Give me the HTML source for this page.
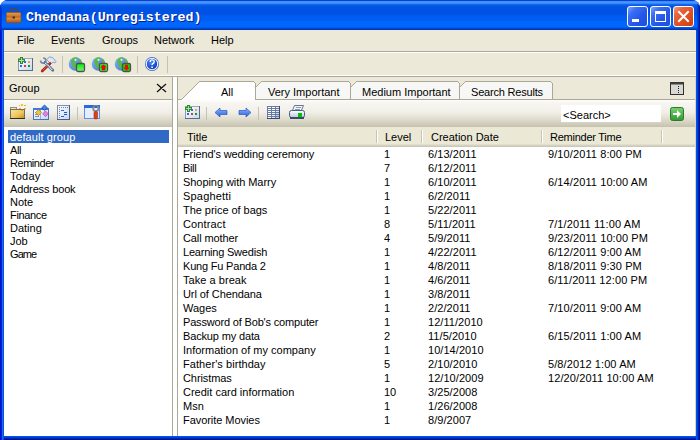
<!DOCTYPE html>
<html><head><meta charset="utf-8">
<style>
*{box-sizing:border-box;margin:0;padding:0}
html,body{width:700px;height:440px;overflow:hidden;background:#fff}
body{position:relative;font-family:"Liberation Sans",sans-serif;font-size:11px;color:#000}
.a{position:absolute}
#win{left:0;top:0;width:700px;height:440px;background:#0831d9;border-radius:8px 8px 0 0;overflow:hidden}
#title{left:0;top:0;width:700px;height:30px;background:linear-gradient(180deg,#0a3cd6 0,#0a3cd6 1px,#3a8ef8 1px,#4a9bff 3px,#2074f4 4px,#0a5ce8 5px,#0052e2 7px,#0052e2 14px,#005cf0 16px,#005ef2 20px,#0066fe 22px,#0066fe 27px,#0050e0 28px,#0040c4 29px,#002c9c 30px)}
#lb{left:0;top:30px;width:4px;height:410px;background:linear-gradient(90deg,#0014cf 0,#0014cf 1px,#0024d8 1px,#0024d8 2px,#1a68f2 2px,#1a68f2 3px,#0a52dc 3px)}
#rb{left:696px;top:30px;width:4px;height:410px;background:linear-gradient(90deg,#0052f0 0,#0052f0 1px,#0040d6 1px,#0040d6 2px,#0022ac 2px,#0022ac 3px,#00138c 3px)}
#bb{left:4px;top:436px;width:692px;height:4px;background:linear-gradient(180deg,#0052f0 0,#0052f0 1px,#0040d2 1px,#0040d2 2px,#0026b0 2px,#0026b0 3px,#00138c 3px)}
#client{left:4px;top:30px;width:692px;height:406px;background:#ece9d8}
#ttxt{left:26px;top:10px;font-family:"Liberation Mono",monospace;font-weight:bold;font-size:13.3px;color:#fff;text-shadow:1px 1px #0a1e8a;line-height:15px;white-space:pre}
.tb{top:6px;width:21px;height:21px;border:1px solid #fff;border-radius:3px}
.blue{background:linear-gradient(135deg,#7aa6ff 0,#3b6ef5 25%,#2457e8 60%,#1f4fdd 100%)}
.red{background:linear-gradient(135deg,#f0a080 0,#e8643c 25%,#df4f20 60%,#cf3e10 100%)}
.menu{top:34px;line-height:12px;white-space:pre}
.li{line-height:12px;white-space:pre}
.tab{line-height:12px;white-space:pre}
</style></head><body>
<div id="win" class="a">
 <div id="title" class="a"></div>
 <div id="lb" class="a"></div>
 <div id="rb" class="a"></div>
 <div id="bb" class="a"></div>
 <div class="a" style="left:0;top:5px;width:1px;height:25px;background:#0a2cd4"></div>
 <div class="a" style="left:699px;top:6px;width:1px;height:24px;background:#00189a"></div>
 <div class="a" style="left:698px;top:5px;width:1px;height:25px;background:#0630c4"></div>
 <div class="a" style="left:697px;top:4px;width:1px;height:26px;background:rgba(0,40,200,0.5)"></div>
 <div class="a" style="left:1px;top:8px;width:1px;height:22px;background:rgba(0,30,200,0.5)"></div>
 <div id="client" class="a"></div>
</div>
<div id="ttxt" class="a">Chendana(Unregistered)</div>
<div class="a tb blue" style="left:627px"><div class="a" style="left:4px;top:12px;width:7px;height:3px;background:#fff"></div></div>
<div class="a tb blue" style="left:650px"><div class="a" style="left:4px;top:4px;width:11px;height:11px;border:1px solid #fff;border-top-width:3px"></div></div>
<div class="a tb red" style="left:673px"><svg class="a" style="left:0;top:0" width="19" height="19"><path d="M5 5 L14 14 M14 5 L5 14" stroke="#fff" stroke-width="2" stroke-linecap="square"/></svg></div>

<!-- menu -->
<div class="a menu" style="left:17px">File</div>
<div class="a menu" style="left:51px">Events</div>
<div class="a menu" style="left:102px">Groups</div>
<div class="a menu" style="left:154px">Network</div>
<div class="a menu" style="left:211px">Help</div>
<div class="a" style="left:4px;top:51px;width:692px;height:1px;background:#aca899"></div>
<div class="a" style="left:4px;top:52px;width:692px;height:1px;background:#fff"></div>
<div class="a" style="left:4px;top:75px;width:692px;height:1px;background:#fff"></div>
<div class="a" style="left:4px;top:76px;width:692px;height:1px;background:#aca899"></div>


<!-- main toolbar -->
<svg class="a" style="left:0;top:0" width="700" height="440">
 <defs>
  <linearGradient id="card" x1="0" y1="0" x2="1" y2="1"><stop offset="0" stop-color="#ffffff"/><stop offset="1" stop-color="#c9daf2"/></linearGradient>
  <linearGradient id="globe" x1="0" y1="0" x2="1" y2="1"><stop offset="0" stop-color="#8ab8ff"/><stop offset="1" stop-color="#3a6ed8"/></linearGradient>
  <linearGradient id="gsq" x1="0" y1="0" x2="0" y2="1"><stop offset="0" stop-color="#00f000"/><stop offset="1" stop-color="#80ee80"/></linearGradient>
  <radialGradient id="help" cx="0.4" cy="0.35" r="0.7"><stop offset="0" stop-color="#4a8cff"/><stop offset="1" stop-color="#0a38b8"/></radialGradient>
  <linearGradient id="folder" x1="0" y1="0" x2="1" y2="1"><stop offset="0" stop-color="#fde9a0"/><stop offset="1" stop-color="#d9a530"/></linearGradient>
  <linearGradient id="arrow" x1="0" y1="0" x2="0" y2="1"><stop offset="0" stop-color="#8fb8ff"/><stop offset="1" stop-color="#2a5ed8"/></linearGradient>
  <linearGradient id="gbtn" x1="0" y1="0" x2="0" y2="1"><stop offset="0" stop-color="#7cd070"/><stop offset="1" stop-color="#2e9a34"/></linearGradient>
  <linearGradient id="hamm" x1="0" y1="0" x2="1" y2="1"><stop offset="0" stop-color="#f4f8ff"/><stop offset="1" stop-color="#a8b8d8"/></linearGradient>
 </defs>
 <g shape-rendering="crispEdges">
  <rect x="18" y="58" width="15" height="13" fill="#5a6a8a"/>
  <rect x="18" y="58" width="14" height="1" fill="#9aa8c0"/>
  <rect x="18" y="58" width="1" height="12" fill="#8a98b0"/>
  <rect x="19" y="59" width="13" height="11" fill="url(#card)"/>
  <rect x="24" y="61" width="2" height="2" fill="#2f6fe0"/><rect x="28" y="61" width="2" height="2" fill="#f5a040"/>
  <rect x="20" y="65" width="2" height="2" fill="#2f6fe0"/><rect x="24" y="65" width="2" height="2" fill="#e04020"/><rect x="28" y="65" width="2" height="2" fill="#10a020"/>
  <rect x="20" y="57" width="3" height="7" fill="#2f8a2f"/>
  <rect x="18" y="59" width="7" height="3" fill="#2f8a2f"/>
  <rect x="21" y="58" width="1" height="5" fill="#a8e0a0"/>
  <rect x="19" y="60" width="5" height="1" fill="#a8e0a0"/>
 </g>
 <g>
  <path d="M46.5 59.5 L49.5 57 L52.5 57.5 L56 61.5 L55 63 L53 62 L51 64 L49 62 Z" fill="#dfe6f4" stroke="#7a8cb0" stroke-width="0.8"/>
  <path d="M50 63.5 L42.2 71" stroke="#a82010" stroke-width="2.6" stroke-linecap="round"/>
  <path d="M49.6 63.6 L42.6 70.4" stroke="#f06a48" stroke-width="0.9"/>
  <path d="M40.6 60.6 A2.6 2.6 0 1 0 43.2 58" fill="none" stroke="#7088ac" stroke-width="1.6"/>
  <path d="M45 62.5 L52.8 70.3" stroke="#5a6e98" stroke-width="2.8" stroke-linecap="round"/>
  <path d="M45.4 62.9 L52.4 69.9" stroke="#f4f8ff" stroke-width="1.3" stroke-dasharray="1.1 0.6"/>
 </g>
 <rect x="62" y="56" width="1" height="17" fill="#c5c2b2"/>
 <g id="gl1">
  <circle cx="75.5" cy="64" r="6.8" fill="url(#globe)"/>
  <path d="M71.5 59.5 q2 -2.5 5.5 -2.2 q0.8 1.8 -0.8 3.5 q-2 1.6 -0.4 3.6 q1.2 1.8 -0.2 4 q-1 0.6 -2.2 -0.4 q-0.6 -2.4 -2 -4 q-0.6 -2.4 0.1 -4.5z" fill="#58b848"/>
  <path d="M79 58.5 q2.6 1.6 3 4.6 l-2.2 0.6 q-1.6 -2 -0.8 -5.2z" fill="#58b848"/>
  <circle cx="75.5" cy="59.8" r="1.1" fill="#ffffff" opacity="0.85"/>
 </g>
 <rect x="76.5" y="63.5" width="8" height="8" rx="1.5" fill="url(#gsq)" stroke="#505050" stroke-width="1.3"/>
 <use href="#gl1" x="23"/>
 <rect x="99.5" y="63.5" width="8" height="8" rx="1.5" fill="#80f080" stroke="#505050" stroke-width="1.3"/>
 <rect x="100.5" y="64.5" width="6" height="6" fill="#00e000"/>
 <path d="M103.5 64.6 l3.2 3 h-1.7 v2.6 h-3 v-2.6 h-1.7z" fill="#ff0000"/>
 <use href="#gl1" x="46"/>
 <rect x="122.5" y="63.5" width="8" height="8" rx="1.5" fill="#00e000" stroke="#505050" stroke-width="1.3"/>
 <path d="M126.5 70.4 l3.2 -3 h-1.7 v-2.6 h-3 v2.6 h-1.7z" fill="#ff0000"/>
 <rect x="137" y="56" width="1" height="17" fill="#c5c2b2"/>
 <g>
  <circle cx="152" cy="64" r="7" fill="#3a64c8"/>
  <circle cx="152" cy="64" r="5.7" fill="none" stroke="#eef4ff" stroke-width="1.1"/>
  <circle cx="152" cy="64" r="4.9" fill="url(#help)"/>
  <path d="M150.1 62 q0 -2.1 2 -2.1 q2.1 0 2.1 1.9 q0 1.2 -1.4 1.9 q-0.7 0.4 -0.7 1.4" fill="none" stroke="#fff" stroke-width="1.4"/>
  <rect x="151.3" y="66.5" width="1.6" height="1.5" fill="#fff"/>
 </g>
 <rect x="167" y="56" width="1" height="17" fill="#c5c2b2"/>
</svg>

<!-- left panel -->
<div class="a li" style="left:9px;top:82px">Group</div>
<svg class="a" style="left:156px;top:83px" width="12" height="11"><path d="M1.3 1.3 L9.7 8.7 M9.7 1.3 L1.3 8.7" stroke="#111" stroke-width="1.25" stroke-linecap="round"/></svg>
<div class="a" style="left:4px;top:99px;width:169px;height:1px;background:#aca899"></div>
<div class="a" style="left:4px;top:100px;width:169px;height:27px;background:linear-gradient(180deg,#fdfdfc 0,#f8f6f1 10%,#f1efe8 45%,#e4e1d4 65%,#d3d0c0 85%,#c4c1ae 100%)"></div>
<div class="a" style="left:4px;top:127px;width:168px;height:309px;background:#fff"></div>
<div class="a" style="left:172px;top:77px;width:1px;height:359px;background:#aca899"></div>
<div class="a" style="left:173px;top:77px;width:4px;height:359px;background:#fff"></div>
<div class="a" style="left:177px;top:76px;width:1px;height:360px;background:#aca899"></div>
<div class="a" style="left:8px;top:130px;width:161px;height:13px;background:#316ac5"></div><div class="a li" style="left:10px;letter-spacing:0.09px;top:131px;color:#fff">default group</div><div class="a li" style="left:10px;letter-spacing:-0.35px;top:144px">All</div><div class="a li" style="left:10px;letter-spacing:-0.46px;top:157px">Reminder</div><div class="a li" style="left:10px;letter-spacing:0.25px;top:170px">Today</div><div class="a li" style="left:10px;letter-spacing:-0.15px;top:183px">Address book</div><div class="a li" style="left:10px;letter-spacing:-0.03px;top:196px">Note</div><div class="a li" style="left:10px;letter-spacing:-0.33px;top:209px">Finance</div><div class="a li" style="left:10px;top:222px">Dating</div><div class="a li" style="left:10px;top:235px">Job</div><div class="a li" style="left:10px;letter-spacing:-0.93px;top:248px">Game</div>
<!-- right panel -->
<div class="a" style="left:178px;top:100px;width:517px;height:27px;background:linear-gradient(180deg,#fdfdfc 0,#f8f6f1 10%,#f1efe8 45%,#e4e1d4 65%,#d3d0c0 85%,#c4c1ae 100%)"></div>
<div class="a" style="left:178px;top:127px;width:517px;height:17px;background:#ebe8d6"></div>
<div class="a" style="left:178px;top:144px;width:517px;height:1px;background:#e2decd"></div>
<div class="a" style="left:178px;top:145px;width:517px;height:1px;background:#d6d2c2"></div>
<div class="a" style="left:178px;top:146px;width:517px;height:1px;background:#cbc7b8"></div>
<div class="a" style="left:178px;top:147px;width:517px;height:289px;background:#fff"></div>
<div class="a" style="left:695px;top:77px;width:1px;height:359px;background:#d8d4c4"></div>
<div class="a li" style="left:187px;top:131px">Title</div>
<div class="a li" style="left:385px;top:131px">Level</div>
<div class="a li" style="left:431px;top:131px">Creation Date</div>
<div class="a li" style="left:550px;top:131px;letter-spacing:-0.25px">Reminder Time</div>
<div class="a" style="left:376px;top:130px;width:1px;height:13px;background:#c7c5b2"></div><div class="a" style="left:377px;top:130px;width:1px;height:13px;background:#fff"></div>
<div class="a" style="left:421px;top:130px;width:1px;height:13px;background:#c7c5b2"></div><div class="a" style="left:422px;top:130px;width:1px;height:13px;background:#fff"></div>
<div class="a" style="left:541px;top:130px;width:1px;height:13px;background:#c7c5b2"></div><div class="a" style="left:542px;top:130px;width:1px;height:13px;background:#fff"></div>
<div class="a" style="left:661px;top:130px;width:1px;height:13px;background:#c7c5b2"></div><div class="a" style="left:662px;top:130px;width:1px;height:13px;background:#fff"></div>
<div class="a li" style="left:183px;letter-spacing:-0.12px;top:148px">Friend's wedding ceremony</div><div class="a li" style="left:384px;top:148px">1</div><div class="a li" style="left:428px;letter-spacing:0.05px;top:148px">6/13/2011</div><div class="a li" style="left:548px;letter-spacing:0.1px;top:148px">9/10/2011 8:00 PM</div><div class="a li" style="left:183px;letter-spacing:-0.33px;top:162px">Bill</div><div class="a li" style="left:384px;top:162px">7</div><div class="a li" style="left:428px;letter-spacing:0.05px;top:162px">6/12/2011</div><div class="a li" style="left:183px;letter-spacing:-0.06px;top:176px">Shoping with Marry</div><div class="a li" style="left:384px;top:176px">1</div><div class="a li" style="left:428px;letter-spacing:0.05px;top:176px">6/10/2011</div><div class="a li" style="left:548px;letter-spacing:0.1px;top:176px">6/14/2011 10:00 AM</div><div class="a li" style="left:183px;letter-spacing:0.19px;top:190px">Spaghetti</div><div class="a li" style="left:384px;top:190px">1</div><div class="a li" style="left:428px;letter-spacing:0.05px;top:190px">6/2/2011</div><div class="a li" style="left:183px;letter-spacing:-0.04px;top:204px">The price of bags</div><div class="a li" style="left:384px;top:204px">1</div><div class="a li" style="left:428px;letter-spacing:0.05px;top:204px">5/22/2011</div><div class="a li" style="left:183px;letter-spacing:0.14px;top:218px">Contract</div><div class="a li" style="left:384px;top:218px">8</div><div class="a li" style="left:428px;letter-spacing:0.05px;top:218px">5/11/2011</div><div class="a li" style="left:548px;letter-spacing:0.1px;top:218px">7/1/2011 11:00 AM</div><div class="a li" style="left:183px;letter-spacing:-0.12px;top:232px">Call mother</div><div class="a li" style="left:384px;top:232px">4</div><div class="a li" style="left:428px;letter-spacing:0.05px;top:232px">5/9/2011</div><div class="a li" style="left:548px;letter-spacing:0.1px;top:232px">9/23/2011 10:00 PM</div><div class="a li" style="left:183px;letter-spacing:-0.21px;top:246px">Learning Swedish</div><div class="a li" style="left:384px;top:246px">1</div><div class="a li" style="left:428px;letter-spacing:0.05px;top:246px">4/22/2011</div><div class="a li" style="left:548px;letter-spacing:0.1px;top:246px">6/12/2011 9:00 AM</div><div class="a li" style="left:183px;letter-spacing:-0.19px;top:260px">Kung Fu Panda 2</div><div class="a li" style="left:384px;top:260px">1</div><div class="a li" style="left:428px;letter-spacing:0.05px;top:260px">4/8/2011</div><div class="a li" style="left:548px;letter-spacing:0.1px;top:260px">8/18/2011 9:30 PM</div><div class="a li" style="left:183px;letter-spacing:0.05px;top:274px">Take a break</div><div class="a li" style="left:384px;top:274px">1</div><div class="a li" style="left:428px;letter-spacing:0.05px;top:274px">4/6/2011</div><div class="a li" style="left:548px;letter-spacing:0.1px;top:274px">6/11/2011 12:00 PM</div><div class="a li" style="left:183px;letter-spacing:-0.08px;top:288px">Url of Chendana</div><div class="a li" style="left:384px;top:288px">1</div><div class="a li" style="left:428px;letter-spacing:0.05px;top:288px">3/8/2011</div><div class="a li" style="left:183px;top:302px">Wages</div><div class="a li" style="left:384px;top:302px">1</div><div class="a li" style="left:428px;letter-spacing:0.05px;top:302px">2/2/2011</div><div class="a li" style="left:548px;letter-spacing:0.1px;top:302px">7/10/2011 9:00 AM</div><div class="a li" style="left:183px;letter-spacing:-0.17px;top:316px">Password of Bob's computer</div><div class="a li" style="left:384px;top:316px">1</div><div class="a li" style="left:428px;letter-spacing:0.05px;top:316px">12/11/2010</div><div class="a li" style="left:183px;letter-spacing:-0.15px;top:330px">Backup my data</div><div class="a li" style="left:384px;top:330px">2</div><div class="a li" style="left:428px;letter-spacing:0.05px;top:330px">11/5/2010</div><div class="a li" style="left:548px;letter-spacing:0.1px;top:330px">6/15/2011 1:00 AM</div><div class="a li" style="left:183px;top:344px">Information of my company</div><div class="a li" style="left:384px;top:344px">1</div><div class="a li" style="left:428px;letter-spacing:0.05px;top:344px">10/14/2010</div><div class="a li" style="left:183px;letter-spacing:0.06px;top:358px">Father's birthday</div><div class="a li" style="left:384px;top:358px">5</div><div class="a li" style="left:428px;letter-spacing:0.05px;top:358px">2/10/2010</div><div class="a li" style="left:548px;letter-spacing:0.1px;top:358px">5/8/2012 1:00 AM</div><div class="a li" style="left:183px;letter-spacing:-0.09px;top:372px">Christmas</div><div class="a li" style="left:384px;top:372px">1</div><div class="a li" style="left:428px;letter-spacing:0.05px;top:372px">12/10/2009</div><div class="a li" style="left:548px;letter-spacing:0.1px;top:372px">12/20/2011 10:00 AM</div><div class="a li" style="left:183px;top:386px">Credit card information</div><div class="a li" style="left:384px;top:386px">10</div><div class="a li" style="left:428px;letter-spacing:0.05px;top:386px">3/25/2008</div><div class="a li" style="left:183px;top:400px">Msn</div><div class="a li" style="left:384px;top:400px">1</div><div class="a li" style="left:428px;letter-spacing:0.05px;top:400px">1/26/2008</div><div class="a li" style="left:183px;letter-spacing:-0.05px;top:414px">Favorite Movies</div><div class="a li" style="left:384px;top:414px">1</div><div class="a li" style="left:428px;letter-spacing:0.05px;top:414px">8/9/2007</div>
<svg class="a" style="left:0;top:0" width="700" height="440" shape-rendering="crispEdges"><rect x="177" y="99" width="518" height="1" fill="#aca899"/><polygon points="460,99 460,87 465,82 551,82 552,83 552,99" fill="#f7f7f5" stroke="none"/><rect x="460" y="86" width="1" height="1" fill="#aca899"/><rect x="461" y="85" width="1" height="1" fill="#aca899"/><rect x="462" y="84" width="1" height="1" fill="#aca899"/><rect x="463" y="83" width="1" height="1" fill="#aca899"/><rect x="464" y="82" width="1" height="1" fill="#aca899"/><rect x="465" y="81" width="86" height="1" fill="#aca899"/><rect x="551" y="82" width="1" height="1" fill="#aca899"/><rect x="552" y="83" width="1" height="16" fill="#aca899"/><polygon points="351,99 351,87 356,82 458,82 459,83 459,99" fill="#f7f7f5" stroke="none"/><rect x="351" y="86" width="1" height="1" fill="#aca899"/><rect x="352" y="85" width="1" height="1" fill="#aca899"/><rect x="353" y="84" width="1" height="1" fill="#aca899"/><rect x="354" y="83" width="1" height="1" fill="#aca899"/><rect x="355" y="82" width="1" height="1" fill="#aca899"/><rect x="356" y="81" width="102" height="1" fill="#aca899"/><rect x="458" y="82" width="1" height="1" fill="#aca899"/><rect x="459" y="83" width="1" height="16" fill="#aca899"/><polygon points="256,99 256,87 261,82 349,82 350,83 350,99" fill="#f7f7f5" stroke="none"/><rect x="256" y="86" width="1" height="1" fill="#aca899"/><rect x="257" y="85" width="1" height="1" fill="#aca899"/><rect x="258" y="84" width="1" height="1" fill="#aca899"/><rect x="259" y="83" width="1" height="1" fill="#aca899"/><rect x="260" y="82" width="1" height="1" fill="#aca899"/><rect x="261" y="81" width="88" height="1" fill="#aca899"/><rect x="349" y="82" width="1" height="1" fill="#aca899"/><rect x="350" y="83" width="1" height="16" fill="#aca899"/><polygon points="181,100 199,82 254,82 255,83 255,100" fill="#fff"/><rect x="182" y="99" width="73" height="1" fill="#fff"/><rect x="198" y="82" width="1" height="1" fill="#aca899"/><rect x="197" y="83" width="1" height="1" fill="#aca899"/><rect x="196" y="84" width="1" height="1" fill="#aca899"/><rect x="195" y="85" width="1" height="1" fill="#aca899"/><rect x="194" y="86" width="1" height="1" fill="#aca899"/><rect x="193" y="87" width="1" height="1" fill="#aca899"/><rect x="192" y="88" width="1" height="1" fill="#aca899"/><rect x="191" y="89" width="1" height="1" fill="#aca899"/><rect x="190" y="90" width="1" height="1" fill="#aca899"/><rect x="189" y="91" width="1" height="1" fill="#aca899"/><rect x="188" y="92" width="1" height="1" fill="#aca899"/><rect x="187" y="93" width="1" height="1" fill="#aca899"/><rect x="186" y="94" width="1" height="1" fill="#aca899"/><rect x="185" y="95" width="1" height="1" fill="#aca899"/><rect x="184" y="96" width="1" height="1" fill="#aca899"/><rect x="183" y="97" width="1" height="1" fill="#aca899"/><rect x="182" y="98" width="1" height="1" fill="#aca899"/><rect x="199" y="81" width="55" height="1" fill="#aca899"/><rect x="254" y="82" width="1" height="1" fill="#aca899"/><rect x="255" y="83" width="1" height="16" fill="#aca899"/></svg><div class="a tab" style="left:221px;top:86px">All</div><div class="a tab" style="left:268px;top:86px">Very Important</div><div class="a tab" style="left:362px;top:86px">Medium Important</div><div class="a tab" style="left:471px;top:86px;letter-spacing:-0.2px">Search Results</div>
<!-- search -->
<div class="a" style="left:561px;top:105px;width:100px;height:17px;background:#fff"></div>
<div class="a li" style="left:563px;top:109px">&lt;Search&gt;</div>

<svg class="a" style="left:0;top:0" width="700" height="440">
 <defs>
  <linearGradient id="brief" x1="0" y1="0" x2="0" y2="1"><stop offset="0" stop-color="#e8a050"/><stop offset="0.45" stop-color="#c06820"/><stop offset="0.55" stop-color="#e09040"/><stop offset="1" stop-color="#a85010"/></linearGradient>
  <linearGradient id="tbw" x1="0" y1="0" x2="0" y2="1"><stop offset="0" stop-color="#ffffff"/><stop offset="1" stop-color="#c8dcf8"/></linearGradient>
  <linearGradient id="gridg" x1="0" y1="0" x2="1" y2="1"><stop offset="0" stop-color="#ffffff"/><stop offset="1" stop-color="#b8cce8"/></linearGradient>
 </defs>
 <!-- title icon briefcase -->
 <path d="M9.8 12.5 q0.5 -3.6 4 -3.6 q3.5 0 4 3.6" fill="none" stroke="#4a4a50" stroke-width="1.6"/>
 <rect x="6.3" y="12.6" width="14.6" height="10.2" rx="0.8" fill="url(#brief)" stroke="#8a4a10" stroke-width="0.5"/>
 <path d="M12.5 16.5 h2.5 v2 h-2.5z" fill="#303038"/>
 <!-- left panel toolbar -->
 <defs>
  <linearGradient id="fold2" x1="0" y1="0" x2="1" y2="1"><stop offset="0" stop-color="#fbe49a"/><stop offset="0.6" stop-color="#eec35a"/><stop offset="1" stop-color="#c89020"/></linearGradient>
  <linearGradient id="winb" x1="0" y1="0" x2="1" y2="1"><stop offset="0" stop-color="#ffffff"/><stop offset="1" stop-color="#c0d8f8"/></linearGradient>
  <linearGradient id="prb" x1="0" y1="0" x2="0" y2="1"><stop offset="0" stop-color="#ffffff"/><stop offset="1" stop-color="#b8c8e0"/></linearGradient>
 </defs>
 <g shape-rendering="crispEdges">
  <rect x="10" y="107" width="7" height="2" fill="#909080"/>
  <rect x="11" y="108" width="5" height="1" fill="#f8e8a0"/>
  <rect x="10" y="109" width="15" height="10" fill="#707060"/>
  <rect x="11" y="110" width="13" height="8" fill="url(#fold2)"/>
  <rect x="10" y="118" width="15" height="1" fill="#303020"/>
  <rect x="21" y="104" width="2" height="2" fill="#f0c030"/>
  <rect x="19" y="105" width="1" height="1" fill="#e8b020"/>
  <rect x="24" y="105" width="2" height="1" fill="#f0b020"/>
  <rect x="19" y="108" width="2" height="1" fill="#f0b020"/>
  <rect x="24" y="108" width="2" height="1" fill="#f0b020"/>
  <rect x="21" y="107" width="2" height="2" fill="#fffff0"/>
  <rect x="21" y="110" width="2" height="1" fill="#e8b020"/>
 </g>
 <g shape-rendering="crispEdges">
  <rect x="33" y="108" width="16" height="12" fill="#4a70b8"/>
  <rect x="34" y="110" width="14" height="9" fill="url(#winb)"/>
  <rect x="33" y="108" width="16" height="2" fill="#3a78e8"/>
  <rect x="35" y="112" width="4" height="1" fill="#7890b8"/>
  <rect x="35" y="114" width="4" height="1" fill="#7890b8"/>
  <rect x="35" y="116" width="4" height="1" fill="#7890b8"/>
  <rect x="40" y="110" width="1" height="9" fill="#a0b0c8"/>
 </g>
 <path d="M38.5 109.5 l3 3 l-3 3 l-3 -3z" fill="#f0c040" stroke="#b07810" stroke-width="0.7"/>
 <path d="M45.5 111 l2.8 2.8 l-2.8 2.8 l-2.8 -2.8z" fill="#e880e0" stroke="#a040a8" stroke-width="0.7"/>
 <path d="M44.5 105 l2.8 2.8 l-2.8 2.8 l-2.8 -2.8z" fill="#4a80e8" stroke="#1a3a90" stroke-width="0.7"/>
 <g shape-rendering="crispEdges">
  <rect x="57" y="105" width="13" height="15" fill="#4a5a80"/>
  <rect x="57" y="105" width="12" height="1" fill="#8090b0"/>
  <rect x="57" y="105" width="1" height="14" fill="#7888a8"/>
  <rect x="58" y="106" width="11" height="13" fill="url(#winb)"/>
  <rect x="59" y="107" width="1" height="1" fill="#708098"/><rect x="61" y="107" width="1" height="1" fill="#708098"/><rect x="63" y="107" width="1" height="1" fill="#708098"/><rect x="65" y="107" width="1" height="1" fill="#708098"/><rect x="67" y="107" width="1" height="1" fill="#708098"/>
  <rect x="59" y="109" width="1" height="1" fill="#708098"/><rect x="59" y="111" width="1" height="1" fill="#708098"/><rect x="59" y="113" width="1" height="1" fill="#708098"/><rect x="59" y="115" width="1" height="1" fill="#708098"/><rect x="59" y="117" width="1" height="1" fill="#708098"/>
  <rect x="61" y="110" width="3" height="1" fill="#2a60d0"/>
  <rect x="64" y="112" width="3" height="1" fill="#2a50b0"/>
  <rect x="64" y="114" width="3" height="1" fill="#2a50b0"/>
  <rect x="61" y="116" width="3" height="1" fill="#2a60d0"/>
  <rect x="77" y="107" width="1" height="13" fill="#c5c2b2"/>
  <rect x="84" y="105" width="16" height="14" fill="#5a8ef0"/>
  <rect x="85" y="108" width="14" height="10" fill="#e4eefc"/>
  <rect x="84" y="105" width="16" height="3" fill="#2a68e0"/>
 </g>
 <circle cx="95.8" cy="108.6" r="2.6" fill="none" stroke="#8a8a8a" stroke-width="1.8"/>
 <rect x="94.6" y="106" width="2.4" height="2" fill="#2a68e0"/>
 <rect x="94" y="111.5" width="3.6" height="7.5" rx="1.6" fill="#e04018" stroke="#a02808" stroke-width="0.6"/>
 <!-- right panel toolbar -->
 <g shape-rendering="crispEdges">
  <rect x="185" y="106" width="15" height="13" fill="#5a6a8a"/>
  <rect x="185" y="106" width="14" height="1" fill="#9aa8c0"/>
  <rect x="185" y="106" width="1" height="12" fill="#8a98b0"/>
  <rect x="186" y="107" width="13" height="11" fill="url(#card)"/>
  <rect x="191" y="109" width="2" height="2" fill="#2f6fe0"/><rect x="195" y="109" width="2" height="2" fill="#f5a040"/>
  <rect x="187" y="113" width="2" height="2" fill="#2f6fe0"/><rect x="191" y="113" width="2" height="2" fill="#e04020"/><rect x="195" y="113" width="2" height="2" fill="#10a020"/>
  <rect x="187" y="105" width="3" height="7" fill="#2f8a2f"/>
  <rect x="185" y="107" width="7" height="3" fill="#2f8a2f"/>
  <rect x="188" y="106" width="1" height="5" fill="#a8e0a0"/>
  <rect x="186" y="108" width="5" height="1" fill="#a8e0a0"/>
 </g>
 <rect x="206" y="107" width="1" height="13" fill="#c5c2b2"/>
 <path d="M215 112.5 l5 -4.5 v2.5 h7 v4 h-7 v2.5 z" fill="url(#arrow)" stroke="#2a58c0" stroke-width="0.7"/>
 <path d="M251 112.5 l-5 -4.5 v2.5 h-7 v4 h7 v2.5 z" fill="url(#arrow)" stroke="#2a58c0" stroke-width="0.7"/>
 <rect x="258" y="107" width="1" height="13" fill="#c5c2b2"/>
 <g shape-rendering="crispEdges">
  <rect x="267" y="106" width="13" height="13" fill="#6a7aa0"/>
  <rect x="279" y="106" width="1" height="13" fill="#3a4a68"/>
  <rect x="267" y="118" width="13" height="1" fill="#3a4a68"/>
  <rect x="268" y="107" width="3" height="1" fill="#fff"/><rect x="272" y="107" width="3" height="1" fill="#fff"/><rect x="276" y="107" width="3" height="1" fill="#e8f0ff"/>
  <rect x="268" y="109" width="3" height="1" fill="#fff"/><rect x="272" y="109" width="3" height="1" fill="#fff"/><rect x="276" y="109" width="3" height="1" fill="#e8f0ff"/>
  <rect x="268" y="111" width="3" height="1" fill="#fff"/><rect x="272" y="111" width="3" height="1" fill="#fff"/><rect x="276" y="111" width="3" height="1" fill="#e0e8f8"/>
  <rect x="268" y="113" width="3" height="1" fill="#fff"/><rect x="272" y="113" width="3" height="1" fill="#f0f4ff"/><rect x="276" y="113" width="3" height="1" fill="#c8d8f0"/>
  <rect x="268" y="115" width="3" height="1" fill="#fff"/><rect x="272" y="115" width="3" height="1" fill="#e8f0ff"/><rect x="276" y="115" width="3" height="1" fill="#c0d0e8"/>
  <rect x="268" y="117" width="3" height="1" fill="#fff"/><rect x="272" y="117" width="3" height="1" fill="#e0e8f8"/><rect x="276" y="117" width="3" height="1" fill="#b8c8e0"/>
 </g>
 <path d="M294.5 105.5 h9 l-2.5 6 h-9z" fill="#eef2fa" stroke="#5a6a88" stroke-width="0.9"/>
 <path d="M296 107.5h5 M295 109.5h5" stroke="#7888a8" stroke-width="0.8"/>
 <rect x="289.5" y="110.5" width="15" height="7" rx="2" fill="url(#prb)" stroke="#4a5a78"/>
 <rect x="290" y="117" width="14" height="2" fill="#3a4a68"/>
 <rect x="298" y="113" width="4" height="4" fill="#00c000"/>
 <!-- tab strip icon -->
 <rect x="670.5" y="82.5" width="13" height="12" fill="#d8d8d4" stroke="#303030"/>
 <rect x="670.5" y="82.5" width="13" height="2" fill="#404040"/>
 <path d="M678 86.5h1 M678 88.5h1 M678 90.5h1 M678 92.5h1" stroke="#202020"/>
 <!-- green go button -->
 <rect x="670.5" y="107.5" width="13" height="13" rx="2" fill="url(#gbtn)" stroke="#2a7a2a"/>
 <path d="M673 113 h4 v-3 l4 4 l-4 4 v-3 h-4z" fill="#fff"/>
</svg>
</body></html>
